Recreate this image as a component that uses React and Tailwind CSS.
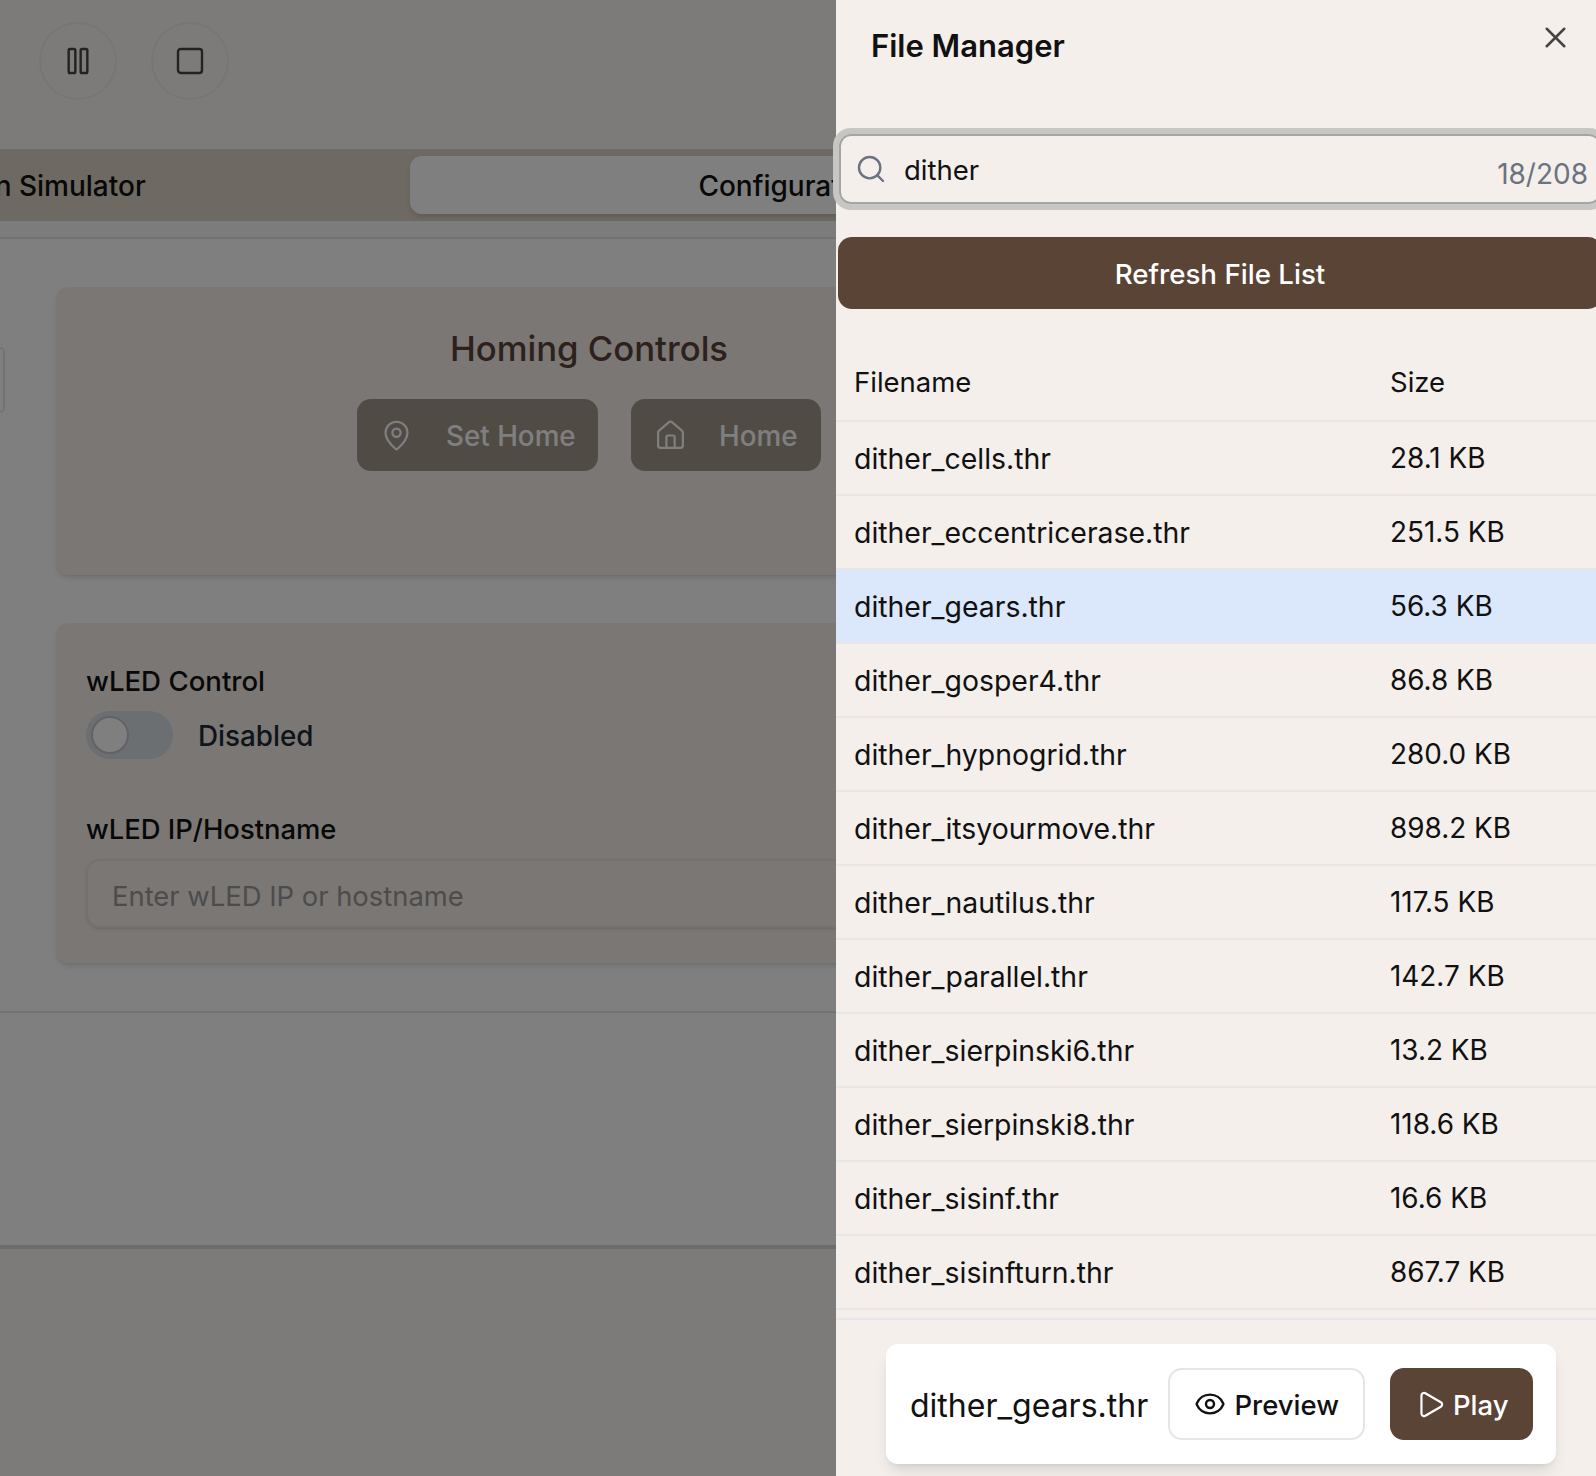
import React from "react";
import { Eye, House, MapPin, Pause, Play, Search, Square, X } from "lucide-react";

const files = [
  ["dither_cells.thr", "28.1 KB"],
  ["dither_eccentricerase.thr", "251.5 KB"],
  ["dither_gears.thr", "56.3 KB"],
  ["dither_gosper4.thr", "86.8 KB"],
  ["dither_hypnogrid.thr", "280.0 KB"],
  ["dither_itsyourmove.thr", "898.2 KB"],
  ["dither_nautilus.thr", "117.5 KB"],
  ["dither_parallel.thr", "142.7 KB"],
  ["dither_sierpinski6.thr", "13.2 KB"],
  ["dither_sierpinski8.thr", "118.6 KB"],
  ["dither_sisinf.thr", "16.6 KB"],
  ["dither_sisinfturn.thr", "867.7 KB"],
];

const Page = () => (
  <div className="flex h-full flex-col bg-white">
    <header className="flex h-[149px] shrink-0 gap-[34px] bg-[#f9f7f3] pl-[39px] pt-[22px]">
      <button className="flex h-[78px] w-[78px] items-center justify-center rounded-full border-2 border-[#efece7] text-[#444]">
        <Pause size={32} strokeWidth={1.8} />
      </button>
      <button className="flex h-[78px] w-[78px] items-center justify-center rounded-full border-2 border-[#efece7] text-[#444]">
        <Square size={32} strokeWidth={1.8} />
      </button>
    </header>
    <nav className="ml-[-351px] flex h-[72px] w-[1600px] shrink-0 gap-[5px] bg-[#dcd4c6] p-[7px] text-[28px] font-medium text-[#111]">
      <div className="flex w-[749px] items-center justify-center pt-[2px]">Pattern Simulator</div>
      <div className="flex w-[760px] items-center justify-center rounded-[12px] bg-white pt-[2px] shadow-md">Configuration</div>
    </nav>
    <div className="h-[18px] shrink-0 border-b-2 border-[#e5e5e5] bg-[#f9f9f9]" />
    <main className="flex h-[774px] shrink-0 border-b-2 border-[#e5e7eb]">
      <div className="mt-[108px] h-[66px] w-[5px] shrink-0 rounded-r-[8px] border-2 border-l-0 border-[#e5e7eb]" />
      <div className="ml-[51px] flex w-[1066px] flex-col gap-[48px] pt-[48px]">
        <section className="h-[288px] rounded-[12px] bg-[#f6eee8] pt-[38px] shadow-md">
          <h2 className="text-center text-[34.7px] leading-[46px] font-medium text-[#5a4336]">Homing Controls</h2>
          <div className="mt-[28px] flex justify-center gap-[33px] text-[27.8px] font-medium text-white">
            <button className="flex h-[72px] w-[241px] items-center gap-[33px] rounded-[14px] bg-[#a2968a] pl-[23px]">
              <MapPin size={33} strokeWidth={1.6} />
              <span className="pt-[4px]">Set Home</span>
            </button>
            <button className="flex h-[72px] w-[190px] items-center gap-[32px] rounded-[14px] bg-[#a2968a] pl-[23px]">
              <House size={33} strokeWidth={1.6} />
              <span className="pt-[4px]">Home</span>
            </button>
          </div>
        </section>
        <section className="h-[340px] rounded-[12px] bg-[#f6eee8] px-[30px] pt-[40px] shadow-md">
          <div className="text-[27.6px] leading-[36px] font-medium text-[#111]">wLED Control</div>
          <div className="mt-[12px] flex items-center gap-[25px]">
            <div className="flex h-[48px] w-[87px] items-center rounded-full bg-[#d6dee4] pl-[5px]">
              <div className="h-[38px] w-[38px] rounded-full border-2 border-[#c0c5cb] bg-white" />
            </div>
            <span className="pt-[4px] text-[27.8px] font-medium text-[#1f2937]">Disabled</span>
          </div>
          <div className="mt-[52px] text-[27.4px] leading-[36px] font-medium text-[#111]">wLED IP/Hostname</div>
          <div className="mt-[12px] flex h-[69px] items-center rounded-[14px] border-2 border-[#e8e2dc] pt-[7px] pl-[24px] text-[27.4px] text-[#999] shadow-sm">
            Enter wLED IP or hostname
          </div>
        </section>
      </div>
    </main>
    <div className="h-[232px] shrink-0" />
    <footer className="relative flex-1 overflow-hidden border-t-4 border-[#d8d8d8] bg-[#f9f7f3]">
      <div className="absolute bottom-0 left-[-150px] h-[70px] w-[1000px] bg-[radial-gradient(ellipse_closest-side_at_50%_100%,rgba(0,0,0,0.14),transparent)]" />
    </footer>
  </div>
);

const FileManager = () => (
  <aside className="absolute top-0 left-[836px] flex h-full w-[768px] flex-col bg-[#f4efeb] text-[#111]">
    <div className="flex h-[134px] shrink-0 items-start justify-between pt-[27px] pr-[31px] pl-[35px]">
      <h1 className="text-[31px] leading-[38px] font-semibold">File Manager</h1>
      <X size={35} strokeWidth={1.7} className="mt-[-7px] text-[#444]" />
    </div>
    <div className="mx-[3px] flex h-[70px] shrink-0 items-center rounded-[12px] border-2 border-[#a5a5a3] pl-[14px] ring-[6px] ring-[#c8c6c2]">
      <Search size={32} strokeWidth={1.8} className="text-[#6b7280]" />
      <span className="ml-[17px] pt-[4px] text-[27.5px]">dither</span>
      <span className="mt-[10px] ml-auto pr-[11px] text-[28px] text-[#6b7280]">18/208</span>
    </div>
    <button className="mx-[2px] mt-[33px] flex h-[72px] shrink-0 items-center justify-center rounded-[14px] bg-[#594436] pt-[4px] text-[27.7px] font-medium text-white">
      Refresh File List
    </button>
    <div className="mt-[38px] grid h-[75px] shrink-0 grid-cols-[555px_1fr] items-center border-b-2 border-[#e9e7e4] pb-[2px] pl-[18px] text-[27.5px]">
      <div>Filename</div>
      <div className="ml-[-19px]">Size</div>
    </div>
    {files.map(([name, size]) => (
      <div
        key={name}
        className={`grid h-[74px] shrink-0 grid-cols-[555px_1fr] items-center border-b-2 border-[#e9e7e4] pt-[2px] pl-[18px] text-[28.4px] ${name === "dither_gears.thr" ? "bg-[#dbe7fa]" : ""}`}
      >
        <div>{name}</div>
        <div className="ml-[-19px] text-[27.9px]">{size}</div>
      </div>
    ))}
    <div className="mt-[8px] flex-1 border-t-2 border-[#e5e7eb] pt-[24px]">
      <div className="ml-[50px] flex h-[120px] w-[670px] items-center rounded-[12px] bg-white pl-[24px] shadow-lg">
        <span className="pt-[3px] text-[32px]">dither_gears.thr</span>
        <button className="ml-[20px] flex h-[72px] w-[197px] items-center justify-center gap-[8px] rounded-[14px] border-2 border-[#e5e5e5] text-[27.5px] font-medium">
          <Eye size={32} strokeWidth={1.8} />
          <span className="pt-[3px]">Preview</span>
        </button>
        <button className="ml-[25px] flex h-[72px] w-[143px] items-center justify-center gap-[7px] rounded-[14px] bg-[#594436] text-[27.5px] font-medium text-white">
          <Play size={31} strokeWidth={1.7} />
          <span className="pt-[3px]">Play</span>
        </button>
      </div>
    </div>
  </aside>
);

export default function App() {
  return (
    <div className="relative h-[1476px] w-[1596px] overflow-hidden font-['Inter',sans-serif]">
      <Page />
      <div className="absolute inset-0 bg-black/50" />
      <FileManager />
    </div>
  );
}
